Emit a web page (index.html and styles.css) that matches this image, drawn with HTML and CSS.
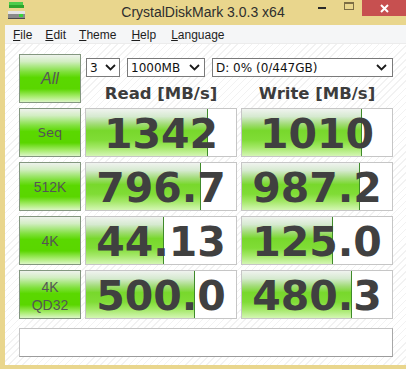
FILE: index.html
```html
<!DOCTYPE html>
<html lang="en">
<head>
    <meta charset="UTF-8">
    <title>CrystalDiskMark 3.0.3 x64</title>
    <link rel="stylesheet" href="styles.css">
</head>
<body>
    <div class="window">
        <!-- Title Bar -->
        <div class="titlebar">
            <div class="app-icon">
                <svg width="17" height="18" viewBox="0 0 17 18">
                    <rect x="1" y="0" width="14" height="3" fill="#4ccc4c"/>
                    <rect x="1" y="3" width="15" height="3" fill="#2ea52e"/>
                    <rect x="0" y="9" width="17" height="3" fill="#e4e4e4"/>
                    <rect x="0" y="12" width="17" height="5" fill="#8a8a8a"/>
                    <rect x="0" y="16" width="17" height="1" fill="#4a4a4a"/>
                    <rect x="11" y="12" width="4" height="3" fill="#3ad23a"/>
                </svg>
            </div>
            <div class="title">CrystalDiskMark 3.0.3 x64</div>
            <div class="controls">
                <span class="ctl-min"></span>
                <span class="ctl-max"></span>
                <span class="ctl-close">
                    <svg width="9" height="9" viewBox="0 0 9 9">
                        <path d="M1 1 L8 8 M8 1 L1 8" stroke="#fff" stroke-width="2"/>
                    </svg>
                </span>
            </div>
        </div>

        <div class="frame-body">
            <!-- Menu -->
            <ul class="menubar">
                <li><u>F</u>ile</li>
                <li><u>E</u>dit</li>
                <li><u>T</u>heme</li>
                <li><u>H</u>elp</li>
                <li><u>L</u>anguage</li>
            </ul>

            <div class="client">
                <div class="bench-grid">
                    <div class="test-btn btn-all">All</div>
                    <div class="top-panel">
                        <div class="selects">
                            <div class="select sel-count"><span>3</span>
                                <svg width="11" height="7" viewBox="0 0 11 7"><path d="M1 1 L5.5 5.5 L10 1" fill="none" stroke="#1a1a1a" stroke-width="1.8"/></svg>
                            </div>
                            <div class="select sel-size"><span>1000MB</span>
                                <svg width="11" height="7" viewBox="0 0 11 7"><path d="M1 1 L5.5 5.5 L10 1" fill="none" stroke="#1a1a1a" stroke-width="1.8"/></svg>
                            </div>
                            <div class="select sel-drive"><span>D: 0% (0/447GB)</span>
                                <svg width="11" height="7" viewBox="0 0 11 7"><path d="M1 1 L5.5 5.5 L10 1" fill="none" stroke="#1a1a1a" stroke-width="1.8"/></svg>
                            </div>
                        </div>
                        <div class="headers">
                            <div>Read [MB/s]</div>
                            <div>Write [MB/s]</div>
                        </div>
                    </div>

                    <div class="test-btn btn-seq">Seq</div>
                    <div class="score"><div class="bar" style="width:122px"></div><span>1342</span></div>
                    <div class="score"><div class="bar" style="width:120px"></div><span>1010</span></div>

                    <div class="test-btn">512K</div>
                    <div class="score"><div class="bar" style="width:115px"></div><span>796.7</span></div>
                    <div class="score"><div class="bar" style="width:118px"></div><span>987.2</span></div>

                    <div class="test-btn">4K</div>
                    <div class="score"><div class="bar" style="width:78px"></div><span>44.13</span></div>
                    <div class="score"><div class="bar" style="width:91px"></div><span>125.0</span></div>

                    <div class="test-btn btn-two">4K<br>QD32</div>
                    <div class="score"><div class="bar" style="width:109px"></div><span>500.0</span></div>
                    <div class="score"><div class="bar" style="width:110px"></div><span>480.3</span></div>
                </div>

                <div class="status"></div>
            </div>
        </div>
    </div>
</body>
</html>
```

FILE: styles.css
```css
/* Global */
* {
    margin: 0;
    padding: 0;
    box-sizing: border-box;
}

body {
    background-color: #e9d68d;
    width: 406px;
    height: 369px;
    overflow: hidden;
}

.window {
    width: 406px;
    height: 369px;
    background-color: #e9d68d;
}

/* Title Bar */
.titlebar {
    height: 25px;
    display: grid;
    grid-template-columns: 1fr auto 1fr;
    align-items: start;
}

.app-icon {
    padding: 2px 0 0 8px;
    height: 20px;
}

.app-icon svg {
    display: block;
}

.title {
    font-family: 'Liberation Sans', Arial, sans-serif;
    font-size: 14px;
    color: #2e2e2e;
    line-height: 24px;
}

.controls {
    justify-self: end;
    display: flex;
    align-items: flex-start;
}

.ctl-min {
    width: 8px;
    height: 2px;
    margin-top: 7px;
    background-color: #2a2a2a;
}

.ctl-max {
    width: 10px;
    height: 8px;
    margin: 2px 8px 0 18px;
    border: 1px solid #7c6d45;
    border-top-width: 2px;
}

.ctl-close {
    width: 44px;
    height: 16px;
    background-color: #c75050;
    display: flex;
    justify-content: center;
    align-items: center;
}

/* Frame body */
.frame-body {
    margin-left: 5px;
    height: 340px;
    background-color: #fff;
}

.menubar {
    height: 19px;
    list-style: none;
    display: flex;
    align-items: center;
    background-color: #f5f6f7;
    border-bottom: 1px solid #ececec;
    padding-left: 8px;
    font-family: 'Liberation Sans', Arial, sans-serif;
    font-size: 12px;
    color: #1e1e1e;
}

.menubar li {
    margin-right: 13px;
    padding-top: 2px;
}

.menubar li:nth-child(3) {
    margin-right: 15px;
}

.menubar li:nth-child(4) {
    margin-right: 15px;
}

/* Client area */
.client {
    height: 321px;
    padding: 10px 0 0 14px;
    background-color: #fff;
    background-image: repeating-linear-gradient(135deg, #fff 0px, #fff 4px, #f2f2f2 4px, #f2f2f2 5px);
}

.bench-grid {
    display: grid;
    grid-template-columns: 62px 152px 152px;
    grid-template-rows: repeat(5, 49px);
    column-gap: 4px;
    row-gap: 5px;
}

/* Test buttons */
.test-btn {
    border: 1px solid #83977f;
    background: linear-gradient(to bottom, #eef2ec 0%, #d2eec2 14%, #7ee03a 36%, #5ad800 48%, #5ad600 72%, #a6ec6c 88%, #dcf6c6 100%);
    display: flex;
    align-items: center;
    justify-content: center;
    text-align: center;
    font-family: 'Liberation Sans', Arial, sans-serif;
    font-size: 14px;
    color: #555;
}

.btn-all {
    font-style: italic;
    font-size: 16px;
    color: #575757;
}

.btn-seq {
    font-family: 'DejaVu Sans', Verdana, sans-serif;
    font-size: 13px;
}

.btn-two {
    line-height: 18px;
    padding-top: 2px;
}

/* Top panel */
.top-panel {
    grid-column: 2 / 4;
}

.selects {
    display: flex;
    gap: 7px;
    margin: 4px 0 0 1px;
}

.select {
    height: 19px;
    border: 1px solid #7a7a7a;
    background-color: #fff;
    display: flex;
    align-items: center;
    justify-content: space-between;
    padding: 0 4px 0 3px;
    font-family: 'DejaVu Sans', Verdana, sans-serif;
    font-size: 12px;
    color: #111;
}

.sel-count {
    width: 34px;
    padding-right: 3px;
}

.sel-size {
    width: 78px;
}

.sel-drive {
    width: 181px;
    padding-right: 5px;
}

.headers {
    display: grid;
    grid-template-columns: 152px 152px;
    column-gap: 4px;
    margin-top: 7px;
    font-family: 'DejaVu Sans', Verdana, sans-serif;
    font-weight: bold;
    font-size: 16.5px;
    line-height: 19px;
    color: #3c3c3c;
    text-align: center;
}

/* Score boxes */
.score {
    position: relative;
    border: 1px solid #c6c6c6;
    background-color: #fff;
    display: flex;
    align-items: center;
    justify-content: center;
    padding-top: 2px;
    font-family: 'DejaVu Sans', Verdana, sans-serif;
    font-weight: bold;
    font-size: 41px;
    color: #404040;
    overflow: hidden;
}

.score .bar {
    position: absolute;
    left: 0;
    top: 0;
    bottom: 0;
    background: linear-gradient(to bottom, #f0f3ef 0%, #d6ead0 16%, #a2dc78 32%, #78d82c 46%, #80dc36 66%, #a4e868 82%, #d4f6b4 100%);
    border-right: 1px solid #3f8a2a;
}

.score span {
    position: relative;
    line-height: 44px;
}

.status {
    width: 374px;
    height: 29px;
    margin-top: 9px;
    background-color: #fff;
    border: 1px solid #c4c4c4;
    border-bottom-color: #9c9c9c;
    border-right-color: #a8a8a8;
}
```
